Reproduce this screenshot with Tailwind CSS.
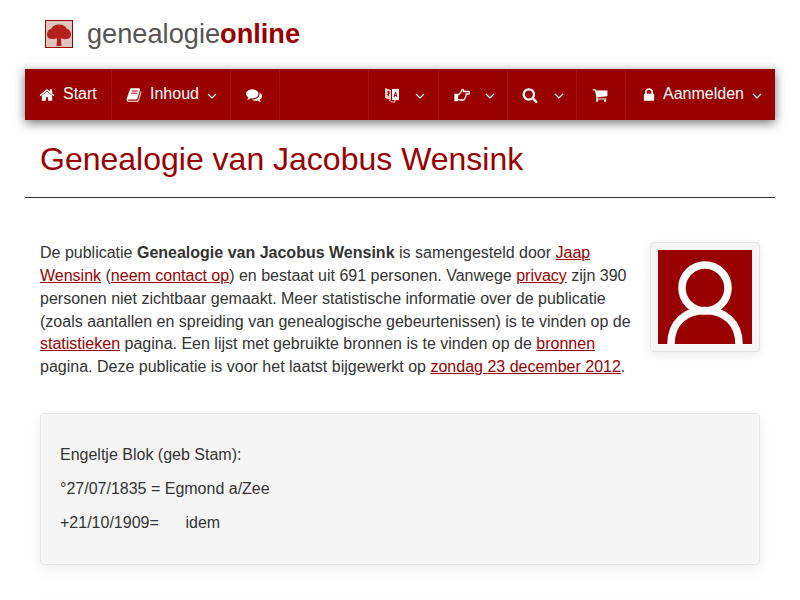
<!DOCTYPE html>
<html lang="en">
<head>
  <meta charset="UTF-8" />
  <title>Genealogie van Jacobus Wensink</title>
  <script src="https://cdn.jsdelivr.net/npm/@tailwindcss/browser@4"></script>
</head>
<body class="bg-white text-[#333] font-['Liberation_Sans',Arial,sans-serif] text-base leading-[22.86px] h-[600px] overflow-hidden">
  <div class="px-[25px]">
    <!-- logo -->
    <header class="h-[69px] flex items-center pl-5 pb-[1px]">
      <svg class="w-7 h-7 shrink-0" viewBox="0 0 28 28">
        <rect x="0.5" y="0.5" width="27" height="27" fill="#e0c4c1" stroke="#990000" />
        <path class="blur-[0.6px]" d="M2 14.500c0-3 1.500-5 4.500-6C8 5.500 10.500 4.500 14 4.500s6 1 7.500 4c3 1 4.500 3 4.500 6 0 3-2 4.500-5 4.500-2 .5-3.500-.5-5-.5l.5 7.500h-5l.5-7.500c-1.500 0-3 1-5 .5-3 0-5-1.500-5-4.500z" fill="#b3211a" />
      </svg>
      <div class="ml-[14px] text-[27.2px] text-[#555]">genealogie<span class="font-bold text-[#990000]">online</span></div>
    </header>

    <!-- nav -->
    <nav class="h-[51px] bg-[#990000] text-white flex shadow-[0_3px_10px_rgba(0,0,0,0.55)]">
      <a class="w-[87px] flex items-center gap-2 pl-[14px] border-r border-[#b00a0a]">
        <svg class="w-4 h-4 fill-white" viewBox="0 0 1792 1792"><path d="M1472 992v480q0 26-19 45t-45 19h-384v-384h-256v384h-384q-26 0-45-19t-19-45v-480q0-1 .5-3t.5-3l575-474 575 474q1 2 1 6zm223-69l-62 74q-8 9-21 11h-3q-13 0-21-7l-692-577-692 577q-12 8-24 7-13-2-21-11l-62-74q-8-10-7-23.500t11-21.500l719-599q32-26 76-26t76 26l244 204v-195q0-14 9-23t23-9h192q14 0 23 9t9 23v408l219 182q10 8 11 21.500t-7 23.500z"/></svg>
        <span>Start</span>
      </a>
      <a class="w-[119px] flex items-center pl-[14px] border-r border-[#b00a0a]">
        <svg class="w-4 h-4 fill-white mr-2" viewBox="0 0 1792 1792"><path d="M1703 478q40 57 18 129l-275 906q-19 64-76.500 107.500t-122.500 43.500h-923q-77 0-148.500-53.500t-99.500-131.500q-24-67-2-127 0-4 3-27t4-37q1-8-3-21.500t-3-19.500q2-11 8-21t16.500-23.500 16.500-23.500q23-38 45-91.500t30-91.500q3-10 .5-30t-.5-28q3-11 17-28t17-23q21-36 42-92t25-90q1-9-2.500-32t.5-28q4-13 22-30.500t22-22.500q19-26 42.500-84.500t27.500-96.500q1-8-3-25.500t-2-26.500q2-8 9-18t18-23 17-21q8-12 16.500-30.500t15-35 16-36 19.500-32 26.500-23.500 36-11.500 47.500 5.500l-1 3q38-9 51-9h761q74 0 114 56t18 130l-274 906q-36 119-71.500 153.500t-128.500 34.500h-869q-27 0-38 15-11 16-1 43 24 70 144 70h923q29 0 56-15.500t35-41.500l300-987q7-22 5-57 38 15 59 43zm-1064 2q-4 13 2 22.500t20 9.500h608q13 0 25.500-9.500t16.500-22.500l21-64q4-13-2-22.500t-20-9.500h-608q-13 0-25.500 9.500t-16.500 22.500zm-83 256q-4 13 2 22.500t20 9.500h608q13 0 25.500-9.500t16.500-22.500l21-64q4-13-2-22.500t-20-9.500h-608q-13 0-25.500 9.500t-16.500 22.500z"/></svg>
        <span>Inhoud</span>
        <svg class="w-[10px] h-[6px] ml-[8px] mt-[3px]" viewBox="0 0 10 6" fill="none" stroke="white" stroke-width="1.1"><path d="M1 1l4 4 4-4"/></svg>
      </a>
      <a class="w-[49px] flex items-center pl-[15px] border-r border-[#b00a0a]">
        <svg class="w-4 h-4 fill-white" viewBox="0 0 1792 1792"><path d="M1408 768q0 139-94 257t-256.500 186.500-353.500 68.500q-86 0-176-16-124 88-278 128-36 9-86 16h-3q-11 0-20.500-8t-11.500-21q-1-3-1-6.500t.5-6.500 2-6l2.500-5 3.500-5.500 4-5 4.500-5 4-4.500q5-6 23-25t26-29.500 22.500-29 25-38.500 20.500-44q-124-72-195-177t-71-224q0-139 94-257t256.500-186.500 353.500-68.500 353.500 68.500 256.500 186.500 94 257zm384 256q0 120-71 224.500t-195 176.500q10 24 20.500 44t25 38.500 22.500 29 26 29.500 23 25q1 1 4 4.500t4.500 5 4 5 3.500 5.500l2.500 5 2 6 .5 6.500-1 6.500q-3 14-13 22t-22 7q-50-7-86-16-154-40-278-128-90 16-176 16-271 0-472-132 58 4 88 4 161 0 309-45t264-129q125-92 192-212t67-254q0-77-23-152 129 71 204 178t75 230z"/></svg>
      </a>
      <div class="flex-1 border-r border-[#b00a0a]"></div>
      <a class="w-[70px] flex items-center pl-[15px] border-r border-[#b00a0a]">
        <svg class="w-4 h-[17px]" viewBox="0 0 16 17"><path d="M1 2l6 2v10l-6-2z" fill="#e9c9c9"/><path d="M8 3h7v11H8z" fill="white"/><path d="M10 11l1.500-5 1.500 5M10.700 9.500h1.800" stroke="#990000" fill="none"/><path d="M3 6h3M4.500 5v5M3 9l3-2" stroke="#990000" stroke-width=".8" fill="none"/><path d="M5 14l3 2h3v-2" stroke="#e9c9c9" fill="none"/></svg>
        <svg class="w-[10px] h-[6px] ml-[15px] mt-[2px]" viewBox="0 0 10 6" fill="none" stroke="white" stroke-width="1.1"><path d="M1 1l4 4 4-4"/></svg>
      </a>
      <a class="w-[69px] flex items-center pl-[15px] border-r border-[#b00a0a]">
        <svg class="w-4 h-[14px]" viewBox="0 0 16 14" fill="none" stroke="white" stroke-width="1.300" stroke-linejoin="round"><path d="M1 6.500h2.500v6H1z" fill="white"/><path d="M3.500 7c2 0 2.500-1.500 3-2.500S8 2.800 8 1.500c1-.5 2 .5 1.500 2l5 0c1.600 0 1.600 2.500 0 2.500h-2.500c.5 2-.2 3-1 3.500 0 1.500-.8 2.500-2 2.500H6c-1 0-1.500-.5-2.500-.5"/></svg>
        <svg class="w-[10px] h-[6px] ml-[15px] mt-[2px]" viewBox="0 0 10 6" fill="none" stroke="white" stroke-width="1.1"><path d="M1 1l4 4 4-4"/></svg>
      </a>
      <a class="w-[69px] flex items-center pl-[14px] border-r border-[#b00a0a]">
        <svg class="w-4 h-4 fill-white" viewBox="0 0 1792 1792"><path d="M1216 832q0-185-131.500-316.500t-316.500-131.500-316.500 131.500-131.500 316.500 131.500 316.500 316.500 131.500 316.500-131.500 131.500-316.500zm512 832q0 52-38 90t-90 38q-54 0-90-38l-343-342q-179 124-399 124-143 0-273.500-55.500t-225-150-150-225-55.500-273.500 55.500-273.500 150-225 225-150 273.500-55.500 273.500 55.500 225 150 150 225 55.500 273.500q0 220-124 399l343 343q37 37 37 90z"/></svg>
        <svg class="w-[10px] h-[6px] ml-[16px] mt-[2px]" viewBox="0 0 10 6" fill="none" stroke="white" stroke-width="1.1"><path d="M1 1l4 4 4-4"/></svg>
      </a>
      <a class="w-[49px] flex items-center pl-[15px] border-r border-[#b00a0a]">
        <svg class="w-4 h-4 fill-white" viewBox="0 0 1792 1792"><path d="M704 1536q0 52-38 90t-90 38-90-38-38-90 38-90 90-38 90 38 38 90zm896 0q0 52-38 90t-90 38-90-38-38-90 38-90 90-38 90 38 38 90zm128-1088v512q0 24-16.500 42.500t-40.500 21.500l-1044 122q13 60 13 70 0 16-24 64h920q26 0 45 19t19 45-19 45-45 19h-1024q-26 0-45-19t-19-45q0-11 8-31.500t16-36 21.500-40 15.500-29.500l-177-823h-204q-26 0-45-19t-19-45 19-45 45-19h256q16 0 28.500 6.500t19.500 15.500 13 24.500 8 26 5.500 29.500 4.500 26h1201q26 0 45 19t19 45z"/></svg>
      </a>
      <a class="w-[149px] flex items-center pl-[15px]">
        <svg class="w-4 h-4 fill-white mr-[6px]" viewBox="0 0 1792 1792"><path d="M640 768h512v-192q0-106-75-181t-181-75-181 75-75 181v192zm832 96v576q0 40-28 68t-68 28h-960q-40 0-68-28t-28-68v-576q0-40 28-68t68-28h32v-192q0-184 132-316t316-132 316 132 132 316v192h32q40 0 68 28t28 68z"/></svg>
        <span>Aanmelden</span>
        <svg class="w-[10px] h-[6px] ml-[8px] mt-[3px]" viewBox="0 0 10 6" fill="none" stroke="white" stroke-width="1.1"><path d="M1 1l4 4 4-4"/></svg>
      </a>
    </nav>

    <!-- title -->
    <div class="h-[78px] border-b border-[#333] px-[15px] pt-[21px]">
      <h1 class="text-[32px] leading-[36px] text-[#990000]">Genealogie van Jacobus Wensink</h1>
    </div>

    <main class="px-[15px]">
      <section class="flex justify-between pt-[44px]">
        <p class="w-[595px]">De publicatie <b>Genealogie van Jacobus Wensink</b> is samengesteld door <a class="text-[#990000] underline">Jaap Wensink</a> (<a class="text-[#990000] underline">neem contact op</a>) en bestaat uit 691 personen. Vanwege <a class="text-[#990000] underline">privacy</a> zijn 390 personen niet zichtbaar gemaakt. Meer statistische informatie over de publicatie (zoals aantallen en spreiding van genealogische gebeurtenissen) is te vinden op de <a class="text-[#990000] underline">statistieken</a> pagina. Een lijst met gebruikte bronnen is te vinden op de <a class="text-[#990000] underline">bronnen</a> pagina. Deze publicatie is voor het laatst bijgewerkt op <a class="text-[#990000] underline">zondag 23 december 2012</a>.</p>
        <div class="w-[110px] h-[110px] p-[7px] bg-[#f5f5f5] border border-[#e3e3e3] rounded shadow-[0_3px_10px_rgba(0,0,0,0.08)] shrink-0">
          <svg class="w-[94px] h-[94px] block" viewBox="0 0 94 94">
            <rect width="94" height="94" fill="#990000" />
            <circle cx="47" cy="38" r="23" fill="none" stroke="white" stroke-width="7.500" />
            <path d="M13 94C13 72 28 60.500 47 60.500S81 72 81 94" fill="none" stroke="white" stroke-width="7.500" />
          </svg>
        </div>
      </section>

      <section class="mt-[34px] h-[152px] bg-[#f5f5f5] border border-[#e3e3e3] rounded px-[19px] pt-[30px] shadow-[0_5px_14px_rgba(0,0,0,0.07)] flex flex-col gap-[11px]">
        <p>Engeltje Blok (geb Stam):</p>
        <p>°27/07/1835 = Egmond a/Zee</p>
        <p class="whitespace-pre">+21/10/1909=      idem</p>
      </section>

      <div class="mt-[32px] h-[3px] bg-white rounded-t shadow-[0_0_8px_rgba(0,0,0,0.06)]"></div>
    </main>
  </div>
</body>
</html>
